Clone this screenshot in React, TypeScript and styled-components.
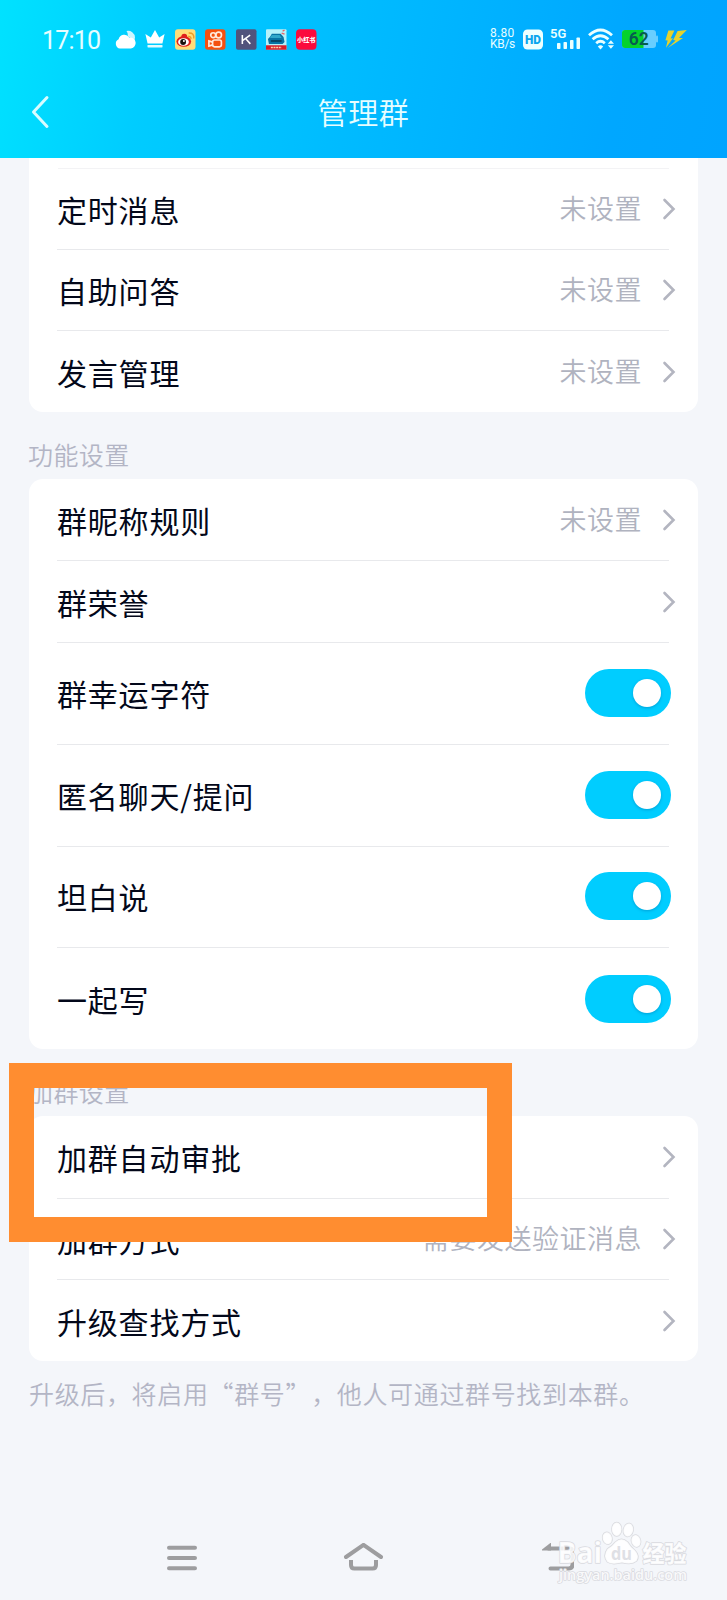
import React from "react";
import styled, { createGlobalStyle } from "styled-components";

const GlobalStyle = createGlobalStyle`
  * { box-sizing: border-box; }
  body {
    margin: 0;
    background: #f4f6fa;
    font-family: "Noto Sans CJK SC", sans-serif;
  }
`;

const Screen = styled.div`
  position: relative;
  display: flex;
  flex-direction: column;
  width: 727px;
  height: 1600px;
  overflow: hidden;
  background: #f4f6fa;
`;

const Header = styled.header`
  height: 158px;
  flex: none;
  color: #e6fdff;
  background: linear-gradient(101deg, #00e2ff 0%, #00ccff 21%, #00b9ff 52%, #00a7ff 84%, #00a4ff 100%);
`;

const StatusBar = styled.div`
  display: flex;
  align-items: center;
  justify-content: space-between;
  height: 78px;
  padding: 0 41px 0 42px;
  svg { overflow: visible; }
`;

const StatusGroup = styled.div<{ $gap: number }>`
  display: flex;
  align-items: center;
  gap: ${(p) => p.$gap}px;
`;

const Clock = styled.span`
  width: 63px;
  padding-top: 3px;
  font: 400 25px/28px Roboto, sans-serif;
  letter-spacing: -0.8px;
  white-space: nowrap;
`;

const NetSpeed = styled.span`
  width: 26px;
  font: 400 12px/11px Roboto, sans-serif;
  letter-spacing: 0.3px;
  white-space: nowrap;
`;

const SpeedUnit = styled.span`
  letter-spacing: -0.3px;
`;

const TitleBar = styled.div`
  display: grid;
  grid-template-columns: 100px 1fr 100px;
  align-items: center;
  height: 67px;
`;

const BackButton = styled.button`
  display: flex;
  padding: 0 0 0 31px;
  border: 0;
  background: none;
`;

const Title = styled.h1`
  margin: 0;
  padding-bottom: 1px;
  font-size: 30px;
  font-weight: 350;
  line-height: 40px;
  letter-spacing: 0.6px;
  text-align: center;
`;

const Content = styled.main`
  flex: 1;
  padding: 0 29px;
`;

const Card = styled.section<{ $continued?: boolean }>`
  border-radius: ${(p) => (p.$continued ? "0 0 14px 14px" : "14px")};
  background: #fff;
`;

const CutRow = styled.div`
  height: 11px;
  margin: 0 29px;
  border-bottom: 1px solid #f3f3f5;
`;

const Row = styled.div<{ $height: number; $raised?: boolean }>`
  display: flex;
  align-items: center;
  height: ${(p) => p.$height}px;
  padding-bottom: ${(p) => (p.$raised ? 2 : 0)}px;
  margin: 0 29px 0 28px;
  border-bottom: 1px solid #e8e9ec;
  &:last-child {
    padding-bottom: 0;
    border-bottom: 0;
  }
`;

const Label = styled.span`
  flex: 1;
  color: #03081a;
  font-size: 30px;
  line-height: 40px;
  letter-spacing: 0.8px;
  white-space: nowrap;
`;

const Value = styled.span`
  padding-bottom: 2px;
  color: #b0b3bf;
  font-size: 27px;
  font-weight: 350;
  line-height: 36px;
  letter-spacing: 0.5px;
  white-space: nowrap;
`;

const Chevron = styled.svg`
  width: 14px;
  height: 24px;
  margin: 0 -7px 0 20px;
`;

const Switch = styled.span`
  display: flex;
  align-items: center;
  justify-content: flex-end;
  width: 86px;
  height: 48px;
  margin-right: -2px;
  padding-right: 10px;
  border-radius: 24px;
  background: #00cdff;
`;

const Knob = styled.span`
  width: 28px;
  height: 28px;
  border-radius: 50%;
  background: #fff;
  box-shadow: 0 1px 3px rgba(0, 80, 140, 0.35);
`;

const GroupTitle = styled.h2`
  height: 67px;
  margin: 0 0 0 -1px;
  padding-top: 23px;
  color: #b3b5c5;
  font-size: 25px;
  font-weight: 350;
  line-height: 38px;
  letter-spacing: 0.4px;
`;

const Note = styled.p`
  margin: 0;
  padding-top: 13px;
  color: #b3b5c5;
  font-size: 25px;
  font-weight: 350;
  line-height: 38px;
  letter-spacing: 0.65px;
  white-space: nowrap;
  text-spacing-trim: space-all;
`;

const NavBar = styled.nav`
  display: grid;
  grid-template-columns: repeat(3, 42px);
  justify-items: center;
  align-items: center;
  column-gap: 140px;
  height: 86px;
  padding: 3px 0 0 161px;
`;

const Highlight = styled.div`
  position: absolute;
  left: 9px;
  top: 1063px;
  width: 503px;
  height: 179px;
  border: 25px solid #ff8d30;
`;

const Watermark = styled.svg`
  position: absolute;
  left: 550px;
  top: 1515px;
  width: 150px;
  height: 75px;
  font-family: "Open Sans", "Noto Sans CJK SC", sans-serif;
`;

type Item = { label: string; height: number; value?: string; toggle?: boolean };

const messageItems: Item[] = [
  { label: "定时消息", height: 81, value: "未设置" },
  { label: "自助问答", height: 81, value: "未设置" },
  { label: "发言管理", height: 81, value: "未设置" },
];

const featureItems: Item[] = [
  { label: "群昵称规则", height: 82, value: "未设置" },
  { label: "群荣誉", height: 82 },
  { label: "群幸运字符", height: 102, toggle: true },
  { label: "匿名聊天/提问", height: 102, toggle: true },
  { label: "坦白说", height: 101, toggle: true },
  { label: "一起写", height: 101, toggle: true },
];

const joinItems: Item[] = [
  { label: "加群自动审批", height: 83 },
  { label: "加群方式", height: 81, value: "需要发送验证消息" },
  { label: "升级查找方式", height: 81 },
];

function Rows({ items }: { items: Item[] }) {
  return (
    <>
      {items.map((item) => (
        <Row key={item.label} $height={item.height} $raised={item.toggle}>
          <Label>{item.label}</Label>
          {item.value && <Value>{item.value}</Value>}
          {item.toggle ? (
            <Switch><Knob /></Switch>
          ) : (
            <Chevron viewBox="0 0 14 24">
              <path d="M2.5 3 L11.5 12 L2.5 21" fill="none" stroke="#b3b5c0" strokeWidth="2.6" strokeLinecap="round" />
            </Chevron>
          )}
        </Row>
      ))}
    </>
  );
}

function AppIcons() {
  return (
    <StatusGroup $gap={9.8}>
      <svg width="21" height="21" viewBox="0 0 21 21">
        <path d="M11.5 2 A7 7 0 0 1 20 8.5 Q20 12 17.8 13 Q16.4 8.6 13 7.6 Q13.4 4.2 11.5 2Z" fill="#cdf6ff" />
        <path d="M5 19.6 A5 5 0 0 1 3.6 10.2 A5.8 5.8 0 0 1 14.2 8.6 A5.4 5.4 0 0 1 16 19.6Z" fill="#fff" />
      </svg>
      <svg width="20" height="21" viewBox="0 0 20 21">
        <path d="M2.6 14.5 L.4 5 L5.8 8.5 L10 1 L14.2 8.5 L19.6 5 L17.4 14.5Z" fill="#fff" />
        <rect x="2.5" y="16" width="15" height="2.4" rx=".6" fill="#e2fbff" />
      </svg>
      <svg width="20.5" height="21" viewBox="0 0 21 21">
        <rect width="21" height="21" rx="3" fill="#ffdd79" />
        <ellipse cx="9" cy="12.5" rx="7.5" ry="5.5" fill="#df1f1c" />
        <circle cx="9.5" cy="7.5" r="3" fill="#df1f1c" />
        <ellipse cx="8.7" cy="13" rx="5.5" ry="3.9" fill="#fff" />
        <circle cx="8.3" cy="13.1" r="3" fill="#18120d" />
        <circle cx="9.1" cy="12.1" r="1" fill="#fff" />
        <path d="M13.5 7.4 Q16.5 7 16.4 10 M14 3.8 Q20 3.5 19.2 9.5" fill="none" stroke="#ef9c25" strokeWidth="1.4" />
      </svg>
      <svg width="20.5" height="21" viewBox="0 0 21 21">
        <rect width="21" height="21" rx="3" fill="#f4500f" />
        <g fill="none" stroke="#ffe9dc" strokeWidth="1.7">
          <circle cx="8.4" cy="6.1" r="2.5" />
          <circle cx="14" cy="5.9" r="2.9" />
          <rect x="7.8" y="11" width="9" height="7" rx="2" />
          <path d="M7.8 13.2 L4 11.9 V17.2 L7.8 16" />
        </g>
      </svg>
      <svg width="20.5" height="21" viewBox="0 0 21 21">
        <rect width="21" height="21" rx="2" fill="#51537c" />
        <path d="M6.5 6 V15 M14.5 6 L7 11.5 M10 9.8 L14.7 15" stroke="#fff" strokeWidth="1.6" fill="none" />
      </svg>
      <svg width="20.5" height="21" viewBox="0 0 21 21">
        <rect width="21" height="21" rx="1" fill="#b6f2fa" />
        <path d="M4 8 L6 4.5 H15 L18 8 L19 13 L17 15 H3 L2 10Z" fill="#0874a4" />
        <path d="M6 6 H14 L16 9 H4Z" fill="#30a7c9" />
        <path d="M5 12 H16" stroke="#074768" strokeWidth="2" />
        <path d="M17 2 L19 1 M16 4 L19 5" stroke="#e96468" strokeWidth="1.4" />
        <path d="M0 16.4 H21 V21 H0Z" fill="#d91e2a" />
        <path d="M5 18.7 H16" stroke="#ffd3a5" strokeWidth="1.6" strokeDasharray="2 .7" />
      </svg>
      <svg width="20.5" height="21" viewBox="0 0 21 21">
        <rect width="21" height="21" rx="4" fill="#fb0a3c" />
        <text x="10.5" y="12.9" textAnchor="middle" fontSize="6.3" fontWeight="800" fill="#fff">小红书</text>
      </svg>
    </StatusGroup>
  );
}

function SystemIcons() {
  return (
    <StatusGroup $gap={7}>
      <NetSpeed>8.80<br /><SpeedUnit>KB/s</SpeedUnit></NetSpeed>
      <svg width="20" height="21" viewBox="0 0 20 21">
        <rect width="20" height="20" y=".5" rx="4.5" fill="#eeffff" />
        <text x="10" y="15" textAnchor="middle" fontFamily="Roboto, sans-serif" fontSize="12.5" fontWeight="900" textLength="16" lengthAdjust="spacingAndGlyphs" fill="#0aa5ee">HD</text>
      </svg>
      <svg width="31" height="22" viewBox="0 0 31 22">
        <text x="0" y="10" fontFamily="Roboto, sans-serif" fontSize="13" fontWeight="600" fill="#eaffff">5G</text>
        <g fill="#eaffff">
          <rect x="7" y="15" width="3.5" height="6" rx=".8" />
          <rect x="13.5" y="14" width="3.5" height="7" rx=".8" />
          <rect x="20" y="12" width="3.5" height="9" rx=".8" />
          <rect x="26.5" y="9.5" width="3.5" height="11.5" rx=".8" />
        </g>
      </svg>
      <svg width="27" height="22" viewBox="0 0 27 22">
        <g fill="none" stroke="#eaffff" strokeWidth="2.8">
          <path d="M1 7.2 Q12.5 -3.2 24 7.2" />
          <path d="M4.6 11.2 Q12.5 4.2 20.4 11.2" />
          <path d="M8.2 15.2 Q12.5 11.4 16.8 15.2" />
        </g>
        <path d="M9.8 18.4 Q12.5 16 15.2 18.4 L12.5 21.4Z" fill="#eaffff" />
        <path d="M19.8 15.7 L22.9 12.2 L26 15.7Z M19.8 17.2 L22.9 20.7 L26 17.2Z" fill="#eaffff" />
      </svg>
      <svg width="36" height="20" viewBox="0 0 36 20">
        <rect x="0" y="1" width="34" height="18" rx="3" fill="#68ceff" />
        <path d="M3 1 H21.5 V19 H3 Q0 19 0 16 V4 Q0 1 3 1Z" fill="#05d22b" />
        <rect x="34" y="6.5" width="2" height="7" rx="1" fill="#68ceff" />
        <text x="16.8" y="16" textAnchor="middle" fontFamily="Roboto, sans-serif" fontSize="17.5" fontWeight="600" fill="#075b50">62</text>
      </svg>
      <svg width="21" height="20" viewBox="0 0 21 20">
        <path d="M3.4 1.6 H9.4 L5.6 9.4 L8 9.2 L1 18.8 L2.6 11.4 L.4 11.2Z" fill="#e5d22c" />
        <path d="M12.6 2 L21.8 1 L14 9 L18 9 L2.8 19 L10.6 11.4 L8.2 11Z" fill="#e5d22c" />
      </svg>
    </StatusGroup>
  );
}

function BaiduMark() {
  return (
    <Watermark viewBox="0 0 150 75">
      <g fill="#ffffff" fillOpacity=".85" stroke="#d9dadf" strokeWidth="1.5" paintOrder="stroke" strokeLinejoin="round">
        <ellipse cx="57.3" cy="23.3" rx="4.6" ry="6" transform="rotate(-15 57.3 23.3)" />
        <ellipse cx="66.7" cy="14.2" rx="4.8" ry="6.8" />
        <ellipse cx="78.3" cy="15" rx="4.8" ry="6.6" transform="rotate(12 78.3 15)" />
        <ellipse cx="86" cy="26" rx="4.5" ry="6" transform="rotate(-15 86 26)" />
        <path d="M57.5 34 Q63 30.5 65.5 27 Q71.5 21.5 77.5 27 Q80.5 32 85 35.5 Q90 41 86.5 46 Q82 50 72 47.5 Q62 50 57.5 47 Q52.5 41 57.5 34Z" />
        <text x="7.5" y="47.5" fontSize="29" fontWeight="700" textLength="44.5" lengthAdjust="spacingAndGlyphs">Bai</text>
        <text x="92.5" y="46.5" fontSize="22.5" fontWeight="800" textLength="44" lengthAdjust="spacingAndGlyphs">经验</text>
        <text x="9" y="64.5" fontSize="14.5" fontWeight="600" textLength="128" lengthAdjust="spacingAndGlyphs">jingyan.baidu.com</text>
      </g>
      <text x="61" y="45" fontSize="17" fontWeight="700" textLength="21" lengthAdjust="spacingAndGlyphs" fill="#dfe0e5">du</text>
    </Watermark>
  );
}

export default function App() {
  return (
    <Screen>
      <GlobalStyle />
      <Header>
        <StatusBar>
          <StatusGroup $gap={9.5}>
            <Clock>17:10</Clock>
            <AppIcons />
          </StatusGroup>
          <SystemIcons />
        </StatusBar>
        <TitleBar>
          <BackButton aria-label="返回">
            <svg width="19" height="34" viewBox="0 0 19 34">
              <path d="M16 2.5 L2.5 17 L16 31.5" fill="none" stroke="#d8fcff" strokeWidth="3" strokeLinejoin="round" strokeLinecap="round" />
            </svg>
          </BackButton>
          <Title>管理群</Title>
        </TitleBar>
      </Header>
      <Content>
        <Card $continued>
          <CutRow />
          <Rows items={messageItems} />
        </Card>
        <GroupTitle>功能设置</GroupTitle>
        <Card><Rows items={featureItems} /></Card>
        <GroupTitle>加群设置</GroupTitle>
        <Card><Rows items={joinItems} /></Card>
        <Note>升级后，将启用“群号”，他人可通过群号找到本群。</Note>
      </Content>
      <NavBar>
        <svg width="36" height="32" viewBox="0 0 36 32">
          <path d="M5 4.8 H31 M5 15 H31 M5 25.2 H31" stroke="#9d9d9f" strokeWidth="4" strokeLinecap="round" />
        </svg>
        <svg width="42" height="32" viewBox="0 0 42 32">
          <path d="M3 14 L20.5 1.8 L38 14" fill="none" stroke="#9d9d9f" strokeWidth="4" strokeLinecap="round" strokeLinejoin="round" />
          <path d="M8 17 V22 Q8 25.5 11.5 25.5 H29.5 Q33 25.5 33 22 V17" fill="none" stroke="#9d9d9f" strokeWidth="4" />
        </svg>
        <svg width="56" height="32" viewBox="-20 0 56 32">
          <path d="M7 5.5 H28 Q31 5.5 31 8.5 V21.5 Q31 25.5 27 25.5 H9" transform="translate(3.5 0)" fill="none" stroke="#9d9d9f" strokeWidth="4" strokeLinecap="round" />
          <path d="M4 6.5 L13 -.5 V7.5 H4Z" fill="#9d9d9f" />
        </svg>
      </NavBar>
      <Highlight />
      <BaiduMark />
    </Screen>
  );
}
